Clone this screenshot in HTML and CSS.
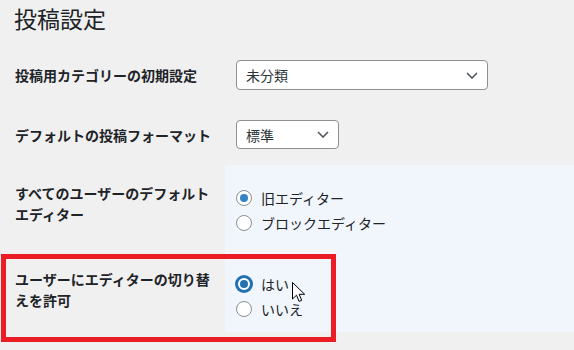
FILE: index.html
```html
<!DOCTYPE html>
<html lang="ja">
<head>
	<meta charset="UTF-8">
	<title>投稿設定</title>
	<link rel="stylesheet" href="styles.css">
</head>
<body>
	<div class="wrap">
		<h1 class="title">投稿設定</h1>

		<div class="form">
			<div class="label row1">投稿用カテゴリーの初期設定</div>
			<div class="field row1">
				<div class="select wide">
					<span>未分類</span>
					<svg class="chev" width="12" height="7" viewBox="0 0 12 7"><path d="M1 1l5 5 5-5" fill="none" stroke="#50575e" stroke-width="1.6"/></svg>
				</div>
			</div>

			<div class="label row2">デフォルトの投稿フォーマット</div>
			<div class="field row2">
				<div class="select narrow">
					<span>標準</span>
					<svg class="chev" width="12" height="7" viewBox="0 0 12 7"><path d="M1 1l5 5 5-5" fill="none" stroke="#50575e" stroke-width="1.6"/></svg>
				</div>
			</div>

			<div class="label row3">すべてのユーザーのデフォルトエディター</div>
			<div class="field hl row3">
				<div class="radio-row"><span class="radio on"></span>旧エディター</div>
				<div class="radio-row"><span class="radio"></span>ブロックエディター</div>
			</div>

			<div class="label row4">ユーザーにエディターの切り替えを許可</div>
			<div class="field hl row4">
				<div class="radio-row"><span class="radio on focus"></span>はい</div>
				<div class="radio-row"><span class="radio"></span>いいえ</div>
			</div>
		</div>

		<div class="mark"></div>

		<svg class="cursor" width="13" height="21" viewBox="0 0 13 21">
			<path d="M0.5 0.5v16.5l4-3.8 2.6 6.2 2.6-1.1-2.6-6h5.6z" fill="#fff" stroke="#000" stroke-width="1" stroke-linejoin="round"/>
		</svg>
	</div>
</body>
</html>
```

FILE: styles.css
```css
*{
	margin: 0;
	padding: 0;
	box-sizing: border-box;
}
body{
	background-color: #f0f0f1;
	color: #1d2327;
	font-family: "Noto Sans CJK JP", "Noto Sans", sans-serif;
	font-size: 14px;
}
.wrap{
	position: relative;
	width: 574px;
	height: 350px;
	overflow: hidden;
}
.title{
	font-size: 23px;
	font-weight: 400;
	line-height: 30px;
	padding: 3px 0 0 14px;
	height: 45px;
}
.form{
	display: grid;
	grid-template-columns: 225px 1fr;
	grid-template-rows: 60px 60px 86px 81px;
}
.label{
	padding-left: 15px;
	width: 215px;
	font-weight: 700;
	line-height: 21px;
}
.row1, .row2{
	display: flex;
	align-items: center;
}
.label.row3, .label.row4{
	padding-top: 18px;
}
.field{
	padding-left: 11px;
}
.field.hl{
	background-color: #f0f6fc;
	padding-top: 20px;
}
.select{
	height: 30px;
	border: 1px solid #8c8f94;
	border-radius: 4px;
	background-color: #fff;
	color: #2c3338;
	display: flex;
	align-items: center;
	justify-content: space-between;
	padding: 0 9px 0 9px;
}
.select.wide{
	width: 252px;
}
.select.narrow{
	width: 103px;
	height: 29px;
	margin-top: -1px;
}
.radio-row{
	height: 25px;
	display: flex;
	align-items: center;
	gap: 9px;
}
.radio{
	width: 16px;
	height: 16px;
	border: 1px solid #8c8f94;
	border-radius: 50%;
	background-color: #fff;
	position: relative;
}
.radio.on::after{
	content: "";
	position: absolute;
	left: 3px;
	top: 3px;
	width: 8px;
	height: 8px;
	border-radius: 50%;
	background-color: #3582c4;
}
.radio.focus{
	border: 2px solid #2271b1;
	box-shadow: 0 0 0 1px #2271b1;
}
.radio.focus::after{
	left: 2px;
	top: 2px;
	background-color: #2271b1;
}
.mark{
	position: absolute;
	left: 1px;
	top: 254px;
	width: 335px;
	height: 88px;
	border: 5px solid #ec1c24;
}
.cursor{
	position: absolute;
	left: 292px;
	top: 282px;
}
```
